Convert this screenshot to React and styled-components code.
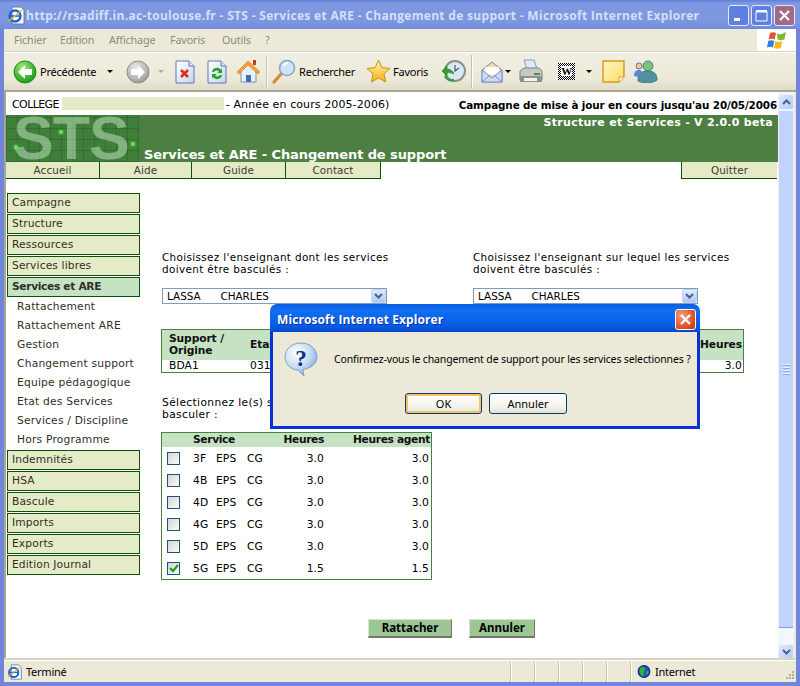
import React from "react";
import styled, { createGlobalStyle } from "styled-components";

const Global = createGlobalStyle`
  html, body { margin: 0; padding: 0; background: #fff; }
  * { box-sizing: border-box; }
  svg { flex: none; }
`;
const ui = `"Noto Sans", "Liberation Sans", sans-serif`;
const web = `"DejaVu Sans", Verdana, sans-serif`;

const Win = styled.div`
  position: relative; width: 800px; height: 686px; overflow: hidden;
  background: #6f86da; display: flex; flex-direction: column;
`;
const TitleBar = styled.div`
  height: 29px; flex: none; display: flex; align-items: center; padding: 1px 5px 0 7px;
  background: linear-gradient(#5f7ed8 0, #7f98e2 3px, #7d96e0 22px, #7089dc 29px);
`;
const TitleText = styled.div`
  margin-left: 0; flex: 1; min-width: 0; overflow: hidden; white-space: nowrap; color: #d3e0f7;
  font: bold 12px "Open Sans", sans-serif; letter-spacing: .31px;
`;
const WinBtn = styled.div`
  width: 21px; height: 21px; flex: none; margin-left: 2px; border: 1px solid #e4eafb; border-radius: 3px;
  background: ${p => p.$close ? "#a06a88" : "#5d80e2"};
  display: flex; align-items: center; justify-content: center;
`;
const Body = styled.div`flex: 1; margin: 0 4px 4px; display: flex; flex-direction: column; min-height: 0;`;
const MenuBar = styled.div`
  height: 23px; flex: none; background: #ece9d8; border-bottom: 1px solid #d8d4c2; display: flex; align-items: center;
  padding-left: 10px; font: 10.8px ${ui}; letter-spacing: -.15px; color: #8c8a7c;
`;
const MenuItem = styled.span`width: ${p => p.$w}px; margin-top: -2px;`;
const Brand = styled.div`
  margin-left: auto; width: 39px; height: 22px; background: #fff; display: flex; align-items: center; justify-content: center;
`;
const Toolbar = styled.div`
  height: 40px; flex: none; background: linear-gradient(#f1efe3, #ece9d8 70%, #dedbc8);
  border-top: 1px solid #fff; border-bottom: 2px solid #a9a692; display: flex; align-items: center; padding-left: 9px;
  font: 11px ${ui}; letter-spacing: -.25px; color: #000;
`;
const ToolIcon = styled.span`display: inline-flex; flex: none; margin-left: ${p => p.$ml || 0}px;`;
const ToolLabel = styled.span`margin-left: ${p => p.$ml || 2}px; white-space: nowrap;`;
const Caret = styled.span`
  width: 0; height: 0; flex: none; margin-left: ${p => p.$ml}px; border: 3px solid transparent; border-top: 3px solid ${p => p.$off ? "#b0ad9c" : "#000"}; border-bottom: 0;
`;
const Sep = styled.span`width: 1px; height: 33px; flex: none; margin-left: ${p => p.$ml}px; background: #c5c2b0; border-right: 1px solid #fff; box-sizing: content-box;`;
const Content = styled.div`flex: 1; display: flex; min-height: 0; border-left: 2px solid #a8a690; border-right: 2px solid #ece9d8; background: #fff;`;
const Page = styled.div`position: relative; flex: 1; background: #fff; color: #000; font: 11px ${web}; min-width: 0;`;
const InfoRow = styled.div`height: 23px; padding: 5px 1px 0 6px; display: flex; align-items: flex-start; white-space: nowrap; font-size: 11px; line-height: 16px; letter-spacing: .1px;`;
const College = styled.span`letter-spacing: -.6px;`;
const Blank = styled.span`width: 162px; height: 13px; flex: none; margin: 0 2px 0 3px; background: #e5ebc9;`;
const InfoEnd = styled.b`margin-left: auto; font-size: 10.4px; letter-spacing: -.12px;`;
const Banner = styled.div`position: relative; height: 47px; background: #4d7f42; color: #fff; font-weight: bold;`;
const Logo = styled.div`
  position: absolute; left: 0; top: 0; width: 133px; height: 47px; background-color: #3f7f3a;
  background-image: repeating-linear-gradient(90deg, rgba(20,70,20,.28) 0 1px, transparent 1px 11px), repeating-linear-gradient(0deg, rgba(20,70,20,.28) 0 1px, transparent 1px 11px);
`;
const LogoText = styled.div`
  position: absolute; left: 7px; top: 0; font: bold 61px/47px "Liberation Sans", sans-serif; letter-spacing: -1px; color: rgba(190,220,185,.55);
`;
const Dot = styled.i`position: absolute; width: 4px; height: 4px; border-radius: 50%; background: #62e858; box-shadow: 0 0 3px #62e858; left: ${p => p.$x}px; top: ${p => p.$y}px;`;
const BannerTop = styled.div`position: absolute; right: 5px; top: 1px; font-size: 11px; line-height: 14px; letter-spacing: .28px;`;
const BannerTitle = styled.div`position: absolute; left: 138px; bottom: 0; font-size: 13px; line-height: 14px; letter-spacing: -.1px; white-space: nowrap;`;
const Nav = styled.div`display: flex; height: 17px; color: #3c3c30; font-size: 10.4px; line-height: 17px; text-align: center; letter-spacing: .1px;`;
const NavCell = styled.div`
  width: ${p => p.$w}px; background: #e5ebc6; border-bottom: 1px solid #0f4f0f; border-right: 1px solid #0f4f0f;
  ${p => p.$end && "margin-left: auto; border-right: 0; border-left: 1px solid #0f4f0f; margin-right: 1px;"}
`;
const Cols = styled.div`display: flex; margin-top: 14px;`;
const Side = styled.div`width: 133px; margin-left: 1px; flex: none; display: flex; flex-direction: column; gap: 1px;`;
const SideItem = styled.div`
  height: 20px; border: 1px solid #0f4f0f; padding-left: 4px; line-height: 18px; font-size: 10.7px; letter-spacing: ${p => p.$on ? "-.35px" : ".12px"}; color: #303028;
  background: ${p => p.$on ? "#c5e2c3" : "#e5ebc6"}; font-weight: ${p => p.$on ? "bold" : "normal"};
`;
const SubList = styled.div`display: flex; flex-direction: column; margin: -1px 0 0;`;
const SubItem = styled.div`height: 19px; padding-left: 10px; line-height: 19px; font-size: 10.7px; letter-spacing: .2px; color: #303028; white-space: nowrap;`;
const Main = styled.div`margin-left: 21px; width: 584px; padding-top: 58px;`;
const Choosers = styled.div`display: flex; gap: 86px; padding-left: 1px;`;
const Chooser = styled.div`width: 225px;`;
const Label = styled.div`line-height: 12px; font-size: 10.4px; letter-spacing: .36px; height: 37px; white-space: nowrap;`;
const Select = styled.div`
  height: 16px; border: 1px solid #7f9db9; display: flex; align-items: center; justify-content: space-between;
  padding-left: 4px; font-size: 10.4px; white-space: pre;
`;
const Arrow = styled.div`
  width: 15px; height: 14px; border-radius: 2px; background: linear-gradient(#e1eafe, #aec8f7); border: 1px solid #c3d3fb;
  display: flex; align-items: center; justify-content: center;
`;
const SupportTable = styled.table`
  margin-top: 25px; width: 583px; border: 1px solid #4d7f42; border-collapse: separate; border-spacing: 0; font-size: 10.7px;
`;
const Th = styled.th`
  background: #c5e2c3; height: 30px; padding: 0 ${p => p.$pr || 0}px 0 ${p => p.$pl || 0}px; font-size: 10.7px; line-height: 12px; font-weight: bold; color: #111; letter-spacing: -.1px;
  text-align: ${p => p.$r ? "right" : "left"}; width: ${p => p.$w ? p.$w + "px" : "auto"};
`;
const Td = styled.td`height: 12px; padding: 0 ${p => p.$pr || 0}px 0 ${p => p.$pl || 0}px; line-height: 12px; text-align: ${p => p.$r ? "right" : "left"}; letter-spacing: .1px;`;
const Prompt = styled.div`margin: 24px 0 0 1px; font-size: 10.7px; line-height: 12px; letter-spacing: .35px; height: 35px; white-space: nowrap;`;
const ServiceTable = styled.table`
  width: 271px; table-layout: fixed; border: 1px solid #4d7f42; border-collapse: separate; border-spacing: 0; font-size: 10.7px; letter-spacing: .1px;
`;
const SvcCol = styled.col`width: ${p => p.$w}px;`;
const SvcTh = styled.th`
  background: #c5e2c3; height: 14px; padding: 0 ${p => p.$pr || 0}px 0 0; font-size: 10.7px; line-height: 14px; color: #111;
  text-align: ${p => p.$r ? "right" : "left"}; white-space: nowrap; letter-spacing: -.35px;
`;
const SvcTd = styled.td`height: 22px; padding: 0 ${p => p.$pr || 0}px 0 0; text-align: ${p => p.$r ? "right" : "left"}; white-space: nowrap;`;
const Code = styled.span`display: inline-block; width: ${p => p.$w}px;`;
const Check = styled.div`
  width: 13px; height: 13px; margin-left: 5px; border: 1px solid #1c5180; background: linear-gradient(135deg, #d6d6d0, #fbfbf8);
  display: flex; align-items: center; justify-content: center;
`;
const Actions = styled.div`display: flex; gap: 17px; margin: 39px 0 0 207px;`;
const GreenBtn = styled.div`
  width: ${p => p.$w}px; height: 19px; background: #9cc694; border: 1px solid; border-color: #d5e5d0 #77756a #77756a #d5e5d0; border-bottom-width: 2px;
  font: bold 11.5px/16px ${ui}; text-align: center; color: #000;
`;
const Scroll = styled.div`width: 16px; flex: none; background: #f3f6fd; display: flex; flex-direction: column; padding-top: 2px;`;
const ScrollBtn = styled.div`
  height: 16px; flex: none; border: 1px solid #eef3fd; border-radius: 2px; background: linear-gradient(135deg, #dfe9fe, #b4caf8); display: flex; align-items: center; justify-content: center;
`;
const Thumb = styled.div`
  height: 518px; flex: none; border: 1px solid #eef3fd; border-bottom-color: #7f9de0; border-radius: 2px; background: #c2d3fb; display: flex; flex-direction: column; gap: 1px; align-items: center; justify-content: center;
`;
const ScrollRest = styled.div`flex: 1;`;
const Grip = styled.i`width: 7px; background: #eef3fd; border-bottom: 1px solid #8ca8e8; height: 2px;`;
const Status = styled.div`
  height: 22px; flex: none; background: #ece9d8; border-top: 1px solid #fff; box-shadow: 0 -2px 0 #d8d4c2; position: relative; display: flex; align-items: center; padding-left: 2px;
  font: 11px ${ui}; letter-spacing: -.25px; color: #000;
`;
const StatusCell = styled.span`width: ${p => p.$w}px; height: 20px; border-left: 1px solid ${p => p.$first ? "#ece9d8" : "#c4c1ae"}; box-shadow: ${p => p.$first ? "none" : "inset 1px 0 0 #fff"}; flex: none; display: flex; align-items: center;`;

const Dialog = styled.div`
  position: absolute; left: 264px; top: 212px; width: 430px; height: 125px; border-radius: 7px 7px 0 0;
  background: linear-gradient(#0a5be0, #0f6ff2 6px, #0a5fe6 20px, #0550d0 27px, #0831d9 28px); padding: 0 3px 3px; display: flex; flex-direction: column;
`;
const DlgTitle = styled.div`
  height: 28px; flex: none; display: flex; align-items: center; justify-content: space-between; padding: 2px 1px 0 4px; color: #fff;
  font: bold 12px "Open Sans", sans-serif; letter-spacing: .1px; text-shadow: 1px 1px 0 #0a2f9e;
`;
const DlgClose = styled.div`
  width: 21px; height: 21px; border: 1px solid #fff; border-radius: 3px; background: radial-gradient(circle at 30% 30%, #f0a080, #dc4a1e 70%, #c03a10);
  display: flex; align-items: center; justify-content: center;
`;
const DlgBody = styled.div`flex: 1; background: #ece9d8; display: flex; flex-direction: column; font: 10.5px ${ui}; color: #000;`;
const DlgMsg = styled.div`display: flex; align-items: flex-start; padding: 10px 0 0 11px; height: 61px;`;
const DlgText = styled.div`margin: 10px 0 0 16px; white-space: nowrap; letter-spacing: -.14px;`;
const DlgBtns = styled.div`display: flex; gap: 7px; margin-left: 132px;`;
const XpBtn = styled.div`
  width: ${p => p.$w}px; height: 21px; border: 1px solid #003c74; border-radius: 3px; text-align: center; font: 11px/19px ${ui};
  background: linear-gradient(#fff, #f3f2ea 70%, #e3e0d0);
  ${p => p.$def && "box-shadow: inset 0 0 0 2px #f4c264;"}
`;
const Resize = styled.svg`position: absolute; right: 1px; bottom: 1px;`;

/* ---------- drawn icons ---------- */
const IeIcon = ({ s = 19 }) => (
  <svg width={s} height={s} viewBox="0 0 19 19">
    <path d="M5 1h9l3 3v14H5z" fill="#fff" stroke="#6a7a90" />
    <circle cx="8" cy="10" r="5.5" fill="none" stroke="#1a66d8" strokeWidth="2.4" />
    <path d="M3 10h10" stroke="#1a66d8" strokeWidth="1.6" />
    <path d="M1 15C4 14 12 6 15 4" fill="none" stroke="#e6b020" strokeWidth="1.4" />
  </svg>
);
const CircleArrow = ({ id, c1, c2, c3, dir }) => (
  <svg width="24" height="24" viewBox="0 0 24 24">
    <defs><radialGradient id={id} cx=".4" cy=".3" r=".8"><stop offset="0" stopColor={c1} /><stop offset=".6" stopColor={c2} /><stop offset="1" stopColor={c3} /></radialGradient></defs>
    <circle cx="12" cy="12" r="11" fill={`url(#${id})`} stroke={c3} />
    <path d={dir === "l" ? "M12 5 5 12l7 7v-4h7V9h-7z" : "M12 5l7 7-7 7v-4H5V9h7z"} fill="#fff" />
  </svg>
);
const Doc = ({ children }) => (
  <svg width="20" height="24" viewBox="0 0 20 24">
    <defs><linearGradient id="dg" x1="0" y1="0" x2="1" y2="1"><stop offset="0" stopColor="#fff" /><stop offset="1" stopColor="#c5d5f2" /></linearGradient></defs>
    <path d="M1 1h13l5 5v17H1z" fill="url(#dg)" stroke="#5a78b8" />
    <path d="M14 1v5h5" fill="#dfe8f8" stroke="#5a78b8" />
    {children}
  </svg>
);
const Home = () => (
  <svg width="25" height="25" viewBox="0 0 25 25">
    <path d="M5 11v12h15V11L12 4z" fill="#e7eef8" stroke="#7a90b0" />
    <path d="M10 23v-7h5v7z" fill="#3a6fc0" />
    <path d="M1 13 12 2l12 11-2 2L12 6 3 15z" fill="#f5a040" stroke="#d07818" strokeWidth=".6" />
    <rect x="17" y="1" width="3" height="5" fill="#b84020" />
  </svg>
);
const Search = () => (
  <svg width="25" height="25" viewBox="0 0 25 25">
    <path d="M2 23 10 14" stroke="#d88a30" strokeWidth="3.2" strokeLinecap="round" />
    <circle cx="15" cy="9" r="7.5" fill="#cfe4fa" stroke="#8aa4c8" strokeWidth="1.6" />
    <path d="M11 7c1-2 3-3 5-3" stroke="#fff" strokeWidth="1.6" fill="none" />
  </svg>
);
const Star = () => (
  <svg width="25" height="25" viewBox="0 0 25 25">
    <defs><linearGradient id="sg" x1="0" y1="0" x2="0" y2="1"><stop offset="0" stopColor="#fff6a8" /><stop offset="1" stopColor="#f5b010" /></linearGradient></defs>
    <path d="M12.5 1l3.4 7.6 8.1.9-6 5.5 1.7 8L12.5 19l-7.2 4 1.7-8-6-5.5 8.1-.9z" fill="url(#sg)" stroke="#c89018" />
  </svg>
);
const History = () => (
  <svg width="25" height="25" viewBox="0 0 25 25">
    <circle cx="14" cy="12" r="10" fill="#dbe9f5" stroke="#8c8f92" strokeWidth="2" />
    <path d="M14 6v6l4-3" stroke="#555" strokeWidth="1.2" fill="none" />
    <path d="M1 12l5-5v3c3 0 6 2 7 5-2-1-4-2-7-1v3z" fill="#2fa02f" stroke="#1a7a1a" strokeWidth=".6" />
    <path d="M4 17c2 4 6 5 9 4" stroke="#2fa02f" strokeWidth="2.4" fill="none" />
  </svg>
);
const Mail = () => (
  <svg width="22" height="24" viewBox="0 0 22 24">
    <path d="M1 10 11 2l10 8v12H1z" fill="#f7d9a0" stroke="#8088c0" />
    <path d="M4 7h14v8H4z" fill="#fff" />
    <path d="M1 10v12h20V10l-10 8z" fill="#c9dcf8" stroke="#8088c0" />
    <path d="M1 22 9 15M21 22l-8-7" stroke="#8088c0" />
  </svg>
);
const Printer = () => (
  <svg width="24" height="25" viewBox="0 0 24 25">
    <path d="M5 1h10l3 9H8z" fill="#dfeafa" stroke="#8a9ab0" />
    <path d="M1 12l4-3h15l3 3v9H1z" fill="#c8c8c4" stroke="#808080" />
    <path d="M1 17h22v6H1z" fill="#8f9090" />
    <rect x="15" y="14" width="6" height="2" fill="#2f9f2f" />
    <path d="M5 19h13v3H5z" fill="#f4f4f4" />
  </svg>
);
const WordIcon = () => (
  <svg width="17" height="17" viewBox="0 0 17 17">
    <defs><pattern id="ck" width="2" height="2" patternUnits="userSpaceOnUse"><rect width="2" height="2" fill="#fff" /><rect width="1" height="1" fill="#000" /><rect x="1" y="1" width="1" height="1" fill="#000" /></pattern></defs>
    <rect width="17" height="17" fill="url(#ck)" />
    <rect x="3" y="3" width="11" height="10" fill="#fff" />
    <text x="8.5" y="12" textAnchor="middle" fontSize="11" fontWeight="bold" fontFamily="Liberation Serif">W</text>
  </svg>
);
const Note = () => (
  <svg width="23" height="23" viewBox="0 0 23 23">
    <defs><linearGradient id="ng" x1="0" y1="0" x2="1" y2="1"><stop offset="0" stopColor="#fff8c8" /><stop offset="1" stopColor="#fbd860" /></linearGradient></defs>
    <path d="M1 1h21v16l-5 5H1z" fill="url(#ng)" stroke="#d49a20" strokeWidth="1.4" />
    <path d="M22 17h-5v5" fill="#fff" stroke="#d49a20" />
  </svg>
);
const Messenger = () => (
  <svg width="25" height="23" viewBox="0 0 25 23">
    <circle cx="15" cy="6" r="5" fill="#7cc07c" stroke="#4a8a70" />
    <path d="M5 21c0-8 4-10 10-10s9 3 9 9c-4 3-13 4-19 1z" fill="#4f93a0" stroke="#3c7a88" />
    <circle cx="6" cy="6" r="3" fill="#f0c890" stroke="#5a7ab0" />
    <path d="M1 16c0-4 2-6 5-6s3 2 3 3c-2 1-3 2-4 4z" fill="#5a88d8" />
  </svg>
);
const Flag = () => (
  <svg width="21" height="19" viewBox="0 0 21 19">
    <path d="M4 2c2-1 4-1 6 0l-1.4 6.5c-2-1-4-1-6 0z" fill="#e8502a" />
    <path d="M11 2.5c2 1 4 1 6 0L20 1l-1.6 7.5c-2 1-5 1-6.8 0z" fill="#7fbb30" />
    <path d="M2.2 10c2-1 4-1 6 0L7 16.5c-2-1-4-1-6 0z" fill="#2f80e0" />
    <path d="M9.4 10.2c2 1 5 1 6.8 0L15 17c-2 1-5 1-7 0z" fill="#f8b818" />
  </svg>
);
const Glyph = ({ d, c = "#4d6185" }) => (
  <svg width="9" height="7" viewBox="0 0 9 7"><path d={d} fill="none" stroke={c} strokeWidth="2" /></svg>
);
const Globe = () => (
  <svg width="14" height="15" viewBox="0 0 12 14">
    <circle cx="6" cy="7" r="5.5" fill="#1a50c8" stroke="#102a70" />
    <path d="M3 3c2-1 4 0 4 2S5 8 6 10 4 12 3 10 1 6 3 3zM8 7l2-1v3L8 10z" fill="#30b040" />
  </svg>
);
const QuestionIcon = () => (
  <svg width="34" height="35" viewBox="0 0 34 35">
    <defs><radialGradient id="qg" cx=".35" cy=".3" r=".8"><stop offset="0" stopColor="#fff" /><stop offset=".55" stopColor="#c6dbf2" /><stop offset="1" stopColor="#6f9fd8" /></radialGradient></defs>
    <path d="M17 1C8 1 1 7 1 15c0 7 6 13 13 13l6 6-1-6.5C27 26 33 22 33 15 33 7 26 1 17 1z" fill="url(#qg)" stroke="#7ea0c8" />
    <text x="17" y="24" textAnchor="middle" fontSize="23" fontWeight="bold" fontFamily="Liberation Serif" fill="#122a88">?</text>
  </svg>
);

const sideTop = ["Campagne", "Structure", "Ressources", "Services libres"];
const sub = ["Rattachement", "Rattachement ARE", "Gestion", "Changement support", "Equipe pédagogique", "Etat des Services", "Services / Discipline", "Hors Programme"];
const sideEnd = ["Indemnités", "HSA", "Bascule", "Imports", "Exports", "Edition Journal"];
const rows = [["3F", "3.0"], ["4B", "3.0"], ["4D", "3.0"], ["4G", "3.0"], ["5D", "3.0"], ["5G", "1.5", true]];
const menus = [["Fichier", 46], ["Edition", 49], ["Affichage", 61], ["Favoris", 52], ["Outils", 43], ["?", 20]];

export default function App() {
  return (
    <Win>
      <Global />
      <TitleBar>
        <IeIcon />
        <TitleText>http://rsadiff.in.ac-toulouse.fr - STS - Services et ARE - Changement de support - Microsoft Internet Explorer</TitleText>
        <WinBtn><svg width="11" height="11"><rect x="1" y="8" width="6" height="3" fill="#fff" /></svg></WinBtn>
        <WinBtn><svg width="13" height="13"><path d="M1 2.5h11v9.5H1z" fill="none" stroke="#fff" /><rect x="1" y="1" width="11" height="2.5" fill="#fff" /></svg></WinBtn>
        <WinBtn $close><svg width="13" height="13"><path d="M2 2l9 9M11 2l-9 9" stroke="#fff" strokeWidth="2.2" /></svg></WinBtn>
      </TitleBar>
      <Body>
        <MenuBar>
          {menus.map(([m, w]) => <MenuItem key={m} $w={w}>{m}</MenuItem>)}
          <Brand><Flag /></Brand>
        </MenuBar>
        <Toolbar>
          <CircleArrow id="bk" c1="#a8ec88" c2="#3fb52f" c3="#1f8a1f" dir="l" />
          <ToolLabel $ml={3}>Précédente</ToolLabel>
          <Caret $ml={11} />
          <ToolIcon $ml={13}><CircleArrow id="fw" c1="#e8e8e8" c2="#b8b8b4" c3="#8c8c88" dir="r" /></ToolIcon>
          <Caret $ml={8} $off />
          <ToolIcon $ml={11}><Doc><path d="M6 10l7 7M13 10l-7 7" stroke="#e02c10" strokeWidth="2.6" /></Doc></ToolIcon>
          <ToolIcon $ml={12}><Doc><path d="M5 12a5 5 0 0 1 9-2l1-2v5h-5l2-1.5a3 3 0 0 0-5 .5z" fill="#24a024" /><path d="M15 15a5 5 0 0 1-9 2l-1 2v-5h5l-2 1.5a3 3 0 0 0 5-.5z" fill="#24a024" /></Doc></ToolIcon>
          <ToolIcon $ml={9}><Home /></ToolIcon>
          <Sep $ml={5} />
          <ToolIcon $ml={4}><Search /></ToolIcon>
          <ToolLabel>Rechercher</ToolLabel>
          <ToolIcon $ml={11}><Star /></ToolIcon>
          <ToolLabel>Favoris</ToolLabel>
          <ToolIcon $ml={13}><History /></ToolIcon>
          <Sep $ml={5} />
          <ToolIcon $ml={8}><Mail /></ToolIcon>
          <Caret $ml={2} />
          <ToolIcon $ml={8}><Printer /></ToolIcon>
          <ToolIcon $ml={15}><WordIcon /></ToolIcon>
          <Caret $ml={11} />
          <ToolIcon $ml={10}><Note /></ToolIcon>
          <ToolIcon $ml={8}><Messenger /></ToolIcon>
        </Toolbar>
        <Content>
          <Page>
            <InfoRow>
              <College>COLLEGE</College><Blank />- Année en cours 2005-2006)
              <InfoEnd>Campagne de mise à jour en cours jusqu'au 20/05/2006</InfoEnd>
            </InfoRow>
            <Banner>
              <Logo>
                <LogoText>STS</LogoText>
                <Dot $x={53} $y={15} /><Dot $x={8} $y={30} /><Dot $x={125} $y={27} />
              </Logo>
              <BannerTop>Structure et Services - V 2.0.0 beta</BannerTop>
              <BannerTitle>Services et ARE - Changement de support</BannerTitle>
            </Banner>
            <Nav>
              <NavCell $w={94}>Accueil</NavCell>
              <NavCell $w={92}>Aide</NavCell>
              <NavCell $w={94}>Guide</NavCell>
              <NavCell $w={95}>Contact</NavCell>
              <NavCell $w={96} $end>Quitter</NavCell>
            </Nav>
            <Cols>
              <Side>
                {sideTop.map(s => <SideItem key={s}>{s}</SideItem>)}
                <SideItem $on>Services et ARE</SideItem>
                <SubList>{sub.map(s => <SubItem key={s}>{s}</SubItem>)}</SubList>
                {sideEnd.map(s => <SideItem key={s}>{s}</SideItem>)}
              </Side>
              <Main>
                <Choosers>
                  <Chooser>
                    <Label>Choisissez l'enseignant dont les services<br />doivent être basculés :</Label>
                    <Select>{"LASSA      CHARLES"}<Arrow><Glyph d="M1 1l3.5 3.5L8 1" /></Arrow></Select>
                  </Chooser>
                  <Chooser>
                    <Label>Choisissez l'enseignant sur lequel les services<br />doivent être basculés :</Label>
                    <Select>{"LASSA      CHARLES"}<Arrow><Glyph d="M1 1l3.5 3.5L8 1" /></Arrow></Select>
                  </Chooser>
                </Choosers>
                <SupportTable>
                  <thead><tr>
                    <Th $pl={7} $w={88}>Support /<br />Origine</Th>
                    <Th>Etablissement</Th>
                    <Th $r $w={60} $pr={1}>Heures</Th>
                  </tr></thead>
                  <tbody><tr>
                    <Td $pl={7}>BDA1</Td>
                    <Td>0310000A</Td>
                    <Td $r $pr={1}>3.0</Td>
                  </tr></tbody>
                </SupportTable>
                <Prompt>Sélectionnez le(s) services à<br />basculer :</Prompt>
                <ServiceTable>
                  <colgroup><SvcCol $w={31} /><SvcCol $w={70} /><SvcCol $w={61} /><SvcCol $w={107} /></colgroup>
                  <thead><tr>
                    <SvcTh />
                    <SvcTh>Service</SvcTh>
                    <SvcTh $r>Heures</SvcTh>
                    <SvcTh $r $pr={1}>Heures agent</SvcTh>
                  </tr></thead>
                  <tbody>
                    {rows.map(([c, h, on]) => (
                      <tr key={c}>
                        <SvcTd><Check>{on && <svg width="11" height="11"><path d="M2 5l3 3 5-6" fill="none" stroke="#21a121" strokeWidth="2.2" /></svg>}</Check></SvcTd>
                        <SvcTd><Code $w={23}>{c}</Code><Code $w={31}>EPS</Code>CG</SvcTd>
                        <SvcTd $r>{h}</SvcTd>
                        <SvcTd $r $pr={2}>{h}</SvcTd>
                      </tr>
                    ))}
                  </tbody>
                </ServiceTable>
                <Actions>
                  <GreenBtn $w={84}>Rattacher</GreenBtn>
                  <GreenBtn $w={66}>Annuler</GreenBtn>
                </Actions>
              </Main>
            </Cols>
            <Dialog>
              <DlgTitle>
                Microsoft Internet Explorer
                <DlgClose><svg width="13" height="13"><path d="M2 2l9 9M11 2l-9 9" stroke="#fff" strokeWidth="2.4" /></svg></DlgClose>
              </DlgTitle>
              <DlgBody>
                <DlgMsg>
                  <QuestionIcon />
                  <DlgText>Confirmez-vous le changement de support pour les services selectionnes ?</DlgText>
                </DlgMsg>
                <DlgBtns>
                  <XpBtn $w={77} $def>OK</XpBtn>
                  <XpBtn $w={78}>Annuler</XpBtn>
                </DlgBtns>
              </DlgBody>
            </Dialog>
          </Page>
          <Scroll>
            <ScrollBtn><Glyph d="M1 5l3.5-3.5L8 5" /></ScrollBtn>
            <Thumb><Grip /><Grip /><Grip /><Grip /></Thumb>
            <ScrollRest />
            <ScrollBtn><Glyph d="M1 1l3.5 3.5L8 1" /></ScrollBtn>
          </Scroll>
        </Content>
        <Status>
          <StatusCell $w={504} $first><IeIcon s={16} /><ToolLabel $ml={3}>Terminé</ToolLabel></StatusCell>
          <StatusCell $w={24} /><StatusCell $w={24} /><StatusCell $w={24} /><StatusCell $w={24} /><StatusCell $w={24} />
          <StatusCell $w={140}><ToolIcon $ml={6}><Globe /></ToolIcon><ToolLabel $ml={4}>Internet</ToolLabel></StatusCell>
          <Resize width="11" height="11"><path d="M9 1v2M6 4v2M9 4v2M3 7v2M6 7v2M9 7v2" stroke="#b0ad98" strokeWidth="2" /></Resize>
        </Status>
      </Body>
    </Win>
  );
}
